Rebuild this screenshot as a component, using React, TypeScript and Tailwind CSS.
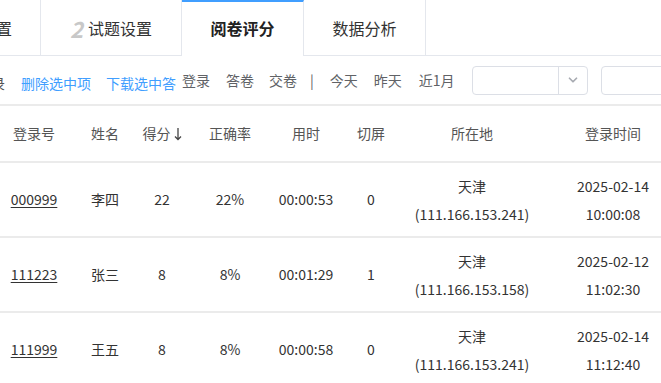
import { ChevronDown } from 'lucide-react'

const cols = ['w-[68px]', 'w-[74px]', 'w-[40px]', 'w-[96px]', 'w-[56px]', 'w-[74px]', 'w-[128px]', 'w-[154px]']

const rows = [
  { id: '000999', name: '李四', score: '22', rate: '22%', time: '00:00:53', cut: '0', ip: '(111.166.153.241)', date: '2025-02-14', clock: '10:00:08' },
  { id: '111223', name: '张三', score: '8', rate: '8%', time: '00:01:29', cut: '1', ip: '(111.166.153.158)', date: '2025-02-12', clock: '11:02:30' },
  { id: '111999', name: '王五', score: '8', rate: '8%', time: '00:00:58', cut: '0', ip: '(111.166.153.241)', date: '2025-02-14', clock: '11:12:40' },
]

const headers = ['登录号', '姓名', '得分', '正确率', '用时', '切屏', '所在地', '登录时间']

export default function App() {
  return (
    <div
      className="w-[661px] h-[383px] overflow-hidden bg-white text-[14px] text-[#333]"
      style={{ fontFamily: '"Noto Sans CJK SC", "Noto Sans", sans-serif' }}
    >
      {/* Tabs */}
      <div className="flex h-[56px] border-b border-[#e4e7ed]">
        <div className="w-[41px] shrink-0 border-r border-[#e4e7ed] overflow-hidden flex items-center">
          <span className="ml-[-4px] text-[16px] text-[#333] whitespace-nowrap">置</span>
        </div>
        <div className="w-[141px] shrink-0 border-r border-[#e4e7ed] flex items-center justify-center gap-[5px]">
          <span className="text-[22px] font-bold italic text-[#c8c8c8] leading-none">2</span>
          <span className="text-[16px] text-[#333]">试题设置</span>
        </div>
        <div className="w-[122px] shrink-0 border-r border-[#e4e7ed] border-t-2 border-t-[#409eff] bg-white -mb-px flex items-center justify-center">
          <span className="text-[16px] font-bold text-[#222] -mt-[2px]">阅卷评分</span>
        </div>
        <div className="w-[122px] shrink-0 border-r border-[#e4e7ed] flex items-center justify-center">
          <span className="text-[16px] text-[#333]">数据分析</span>
        </div>
        <div className="flex-1" />
      </div>

      {/* Toolbar */}
      <div className="flex items-center h-[50px] border-b-2 border-[#ebebeb] whitespace-nowrap">
        <span className="ml-[-9px] mt-[6px] text-[#555]">录</span>
        <span className="ml-[16px] mt-[6px] text-[#409eff]">删除选中项</span>
        <span className="ml-[15px] mt-[6px] text-[#409eff]">下载选中答</span>
        <span className="ml-[6px] text-[#606266]">登录</span>
        <span className="ml-[16px] text-[#606266]">答卷</span>
        <span className="ml-[15px] text-[#606266]">交卷</span>
        <span className="ml-[13px] text-[#606266]">|</span>
        <span className="ml-[16px] text-[#606266]">今天</span>
        <span className="ml-[16px] text-[#606266]">昨天</span>
        <span className="ml-[17px] text-[#606266]">近1月</span>
        <div className="ml-[17px] w-[116px] h-[29px] shrink-0 border border-[#dcdfe6] rounded-[4px] flex">
          <div className="flex-1" />
          <div className="w-[29px] border-l border-[#dcdfe6] flex items-center justify-center">
            <ChevronDown size={14} strokeWidth={3} className="text-[#a8abb2]" />
          </div>
        </div>
        <div className="ml-[13px] w-[100px] h-[29px] shrink-0 border border-[#dcdfe6] rounded-[4px]" />
      </div>

      {/* Table header */}
      <div className="flex h-[57px] items-center border-b-2 border-[#ebebeb] text-[#555] whitespace-nowrap">
        {headers.map((h, i) => (
          <div key={h} className={`${cols[i]} shrink-0 flex items-center justify-center`}>
            {h}
            {i === 2 && (
              <svg width="8" height="14" viewBox="0 0 8 14" className="ml-[3px]" fill="none" stroke="#444" strokeWidth="1.3">
                <path d="M4 1v11.5M1 9.5l3 3 3-3" />
              </svg>
            )}
          </div>
        ))}
      </div>

      {/* Rows */}
      {rows.map((r) => (
        <div key={r.id} className="flex h-[75px] items-center border-b-2 border-[#ebebeb] text-[#333] whitespace-nowrap">
          <div className={`${cols[0]} shrink-0 text-center underline underline-offset-2`}>{r.id}</div>
          <div className={`${cols[1]} shrink-0 text-center`}>{r.name}</div>
          <div className={`${cols[2]} shrink-0 text-center`}>{r.score}</div>
          <div className={`${cols[3]} shrink-0 text-center`}>{r.rate}</div>
          <div className={`${cols[4]} shrink-0 flex justify-center`}>{r.time}</div>
          <div className={`${cols[5]} shrink-0 text-center`}>{r.cut}</div>
          <div className={`${cols[6]} shrink-0 flex flex-col items-center leading-[28px]`}>
            <span>天津</span>
            <span>{r.ip}</span>
          </div>
          <div className={`${cols[7]} shrink-0 flex flex-col items-center leading-[28px]`}>
            <span>{r.date}</span>
            <span>{r.clock}</span>
          </div>
        </div>
      ))}
    </div>
  )
}
